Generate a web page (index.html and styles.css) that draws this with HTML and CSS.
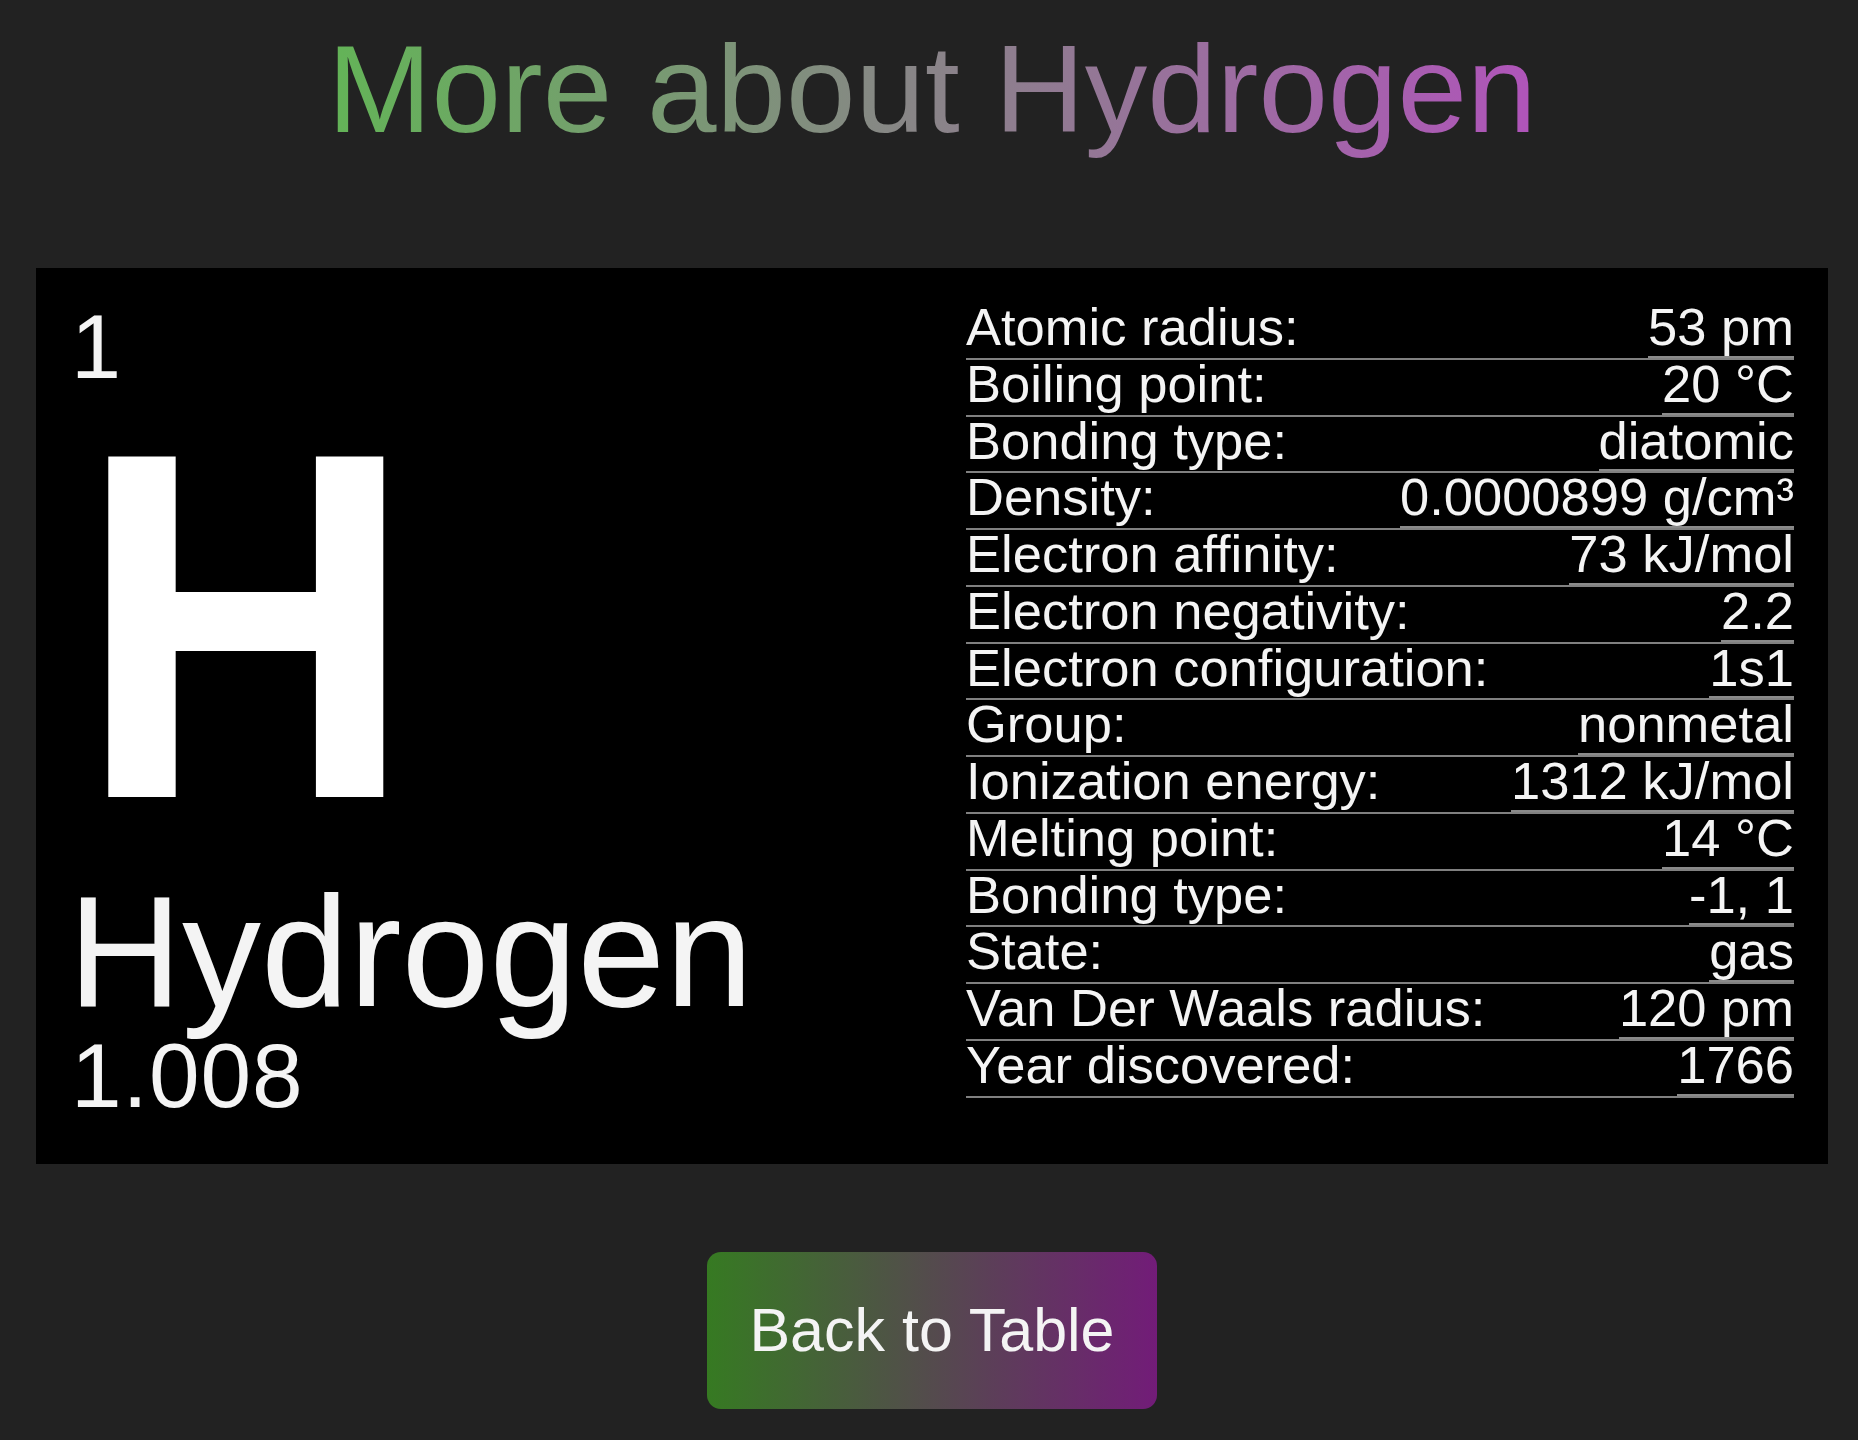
FILE: index.html
```html
<!DOCTYPE html>
<html lang="en">
<head>
<meta charset="utf-8">
<title>More about Hydrogen</title>
<link rel="stylesheet" href="styles.css">
</head>
<body>
<main class="page">
  <h1 class="title"><span class="title-text">More about Hydrogen</span></h1>

  <section class="card">
    <div class="element">
      <div class="element-number">1</div>
      <div class="element-symbol">H</div>
      <div class="element-name">Hydrogen</div>
      <div class="element-mass">1.008</div>
    </div>

    <div class="props">
      <div class="prop"><span class="prop-label">Atomic radius:</span><span class="prop-value">53 pm</span></div>
      <div class="prop"><span class="prop-label">Boiling point:</span><span class="prop-value">20 °C</span></div>
      <div class="prop"><span class="prop-label">Bonding type:</span><span class="prop-value">diatomic</span></div>
      <div class="prop"><span class="prop-label">Density:</span><span class="prop-value">0.0000899 g/cm³</span></div>
      <div class="prop"><span class="prop-label">Electron affinity:</span><span class="prop-value">73 kJ/mol</span></div>
      <div class="prop"><span class="prop-label">Electron negativity:</span><span class="prop-value">2.2</span></div>
      <div class="prop"><span class="prop-label">Electron configuration:</span><span class="prop-value">1s1</span></div>
      <div class="prop"><span class="prop-label">Group:</span><span class="prop-value">nonmetal</span></div>
      <div class="prop"><span class="prop-label">Ionization energy:</span><span class="prop-value">1312 kJ/mol</span></div>
      <div class="prop"><span class="prop-label">Melting point:</span><span class="prop-value">14 °C</span></div>
      <div class="prop"><span class="prop-label">Bonding type:</span><span class="prop-value">-1, 1</span></div>
      <div class="prop"><span class="prop-label">State:</span><span class="prop-value">gas</span></div>
      <div class="prop"><span class="prop-label">Van Der Waals radius:</span><span class="prop-value">120 pm</span></div>
      <div class="prop"><span class="prop-label">Year discovered:</span><span class="prop-value">1766</span></div>
    </div>
  </section>

  <div class="actions">
    <a class="back-button" href="#">Back to Table</a>
  </div>
</main>
</body>
</html>
```

FILE: styles.css
```css
* {
  box-sizing: border-box;
}

html, body {
  margin: 0;
  padding: 0;
  background: #222222;
}

body {
  font-family: "Liberation Sans", Arial, Helvetica, sans-serif;
  color: #f4f4f4;
}

.page {
  margin-left: 6px;
  display: flex;
  flex-direction: column;
  align-items: center;
}

.title {
  margin: 17px 0 107px;
  font-size: 125px;
  font-weight: 400;
  line-height: 144px;
  text-align: center;
}

.title-text {
  display: inline-block;
  background: linear-gradient(to right, #63b457, #b054ba);
  -webkit-background-clip: text;
  background-clip: text;
  color: transparent;
}

.card {
  width: 1792px;
  background: #000000;
  display: flex;
  justify-content: space-between;
  align-items: flex-start;
  padding: 34px 34px 43px 32px;
}

.element {
  display: flex;
  flex-direction: column;
  align-items: flex-start;
  color: #f4f4f4;
}

.element-number {
  margin: 2px 0 0 3px;
  font-size: 90px;
  line-height: 87px;
}

.element-symbol {
  margin: 0 0 10px 9px;
  font-size: 495px;
  font-weight: 700;
  line-height: 470px;
  color: #ffffff;
  transform: scaleX(0.945);
  transform-origin: left center;
}

.element-name {
  font-size: 158px;
  line-height: 160px;
}

.element-mass {
  margin-left: 3px;
  font-size: 91px;
  line-height: 90px;
  letter-spacing: 1px;
}

.props {
  width: 828px;
  margin-top: 1px;
  display: flex;
  flex-direction: column;
}

.prop {
  height: 56.75px;
  display: flex;
  justify-content: space-between;
  align-items: stretch;
  border-bottom: 2px solid #808080;
  font-size: 52.5px;
  line-height: 47px;
}

.prop-label {
  white-space: nowrap;
}

.prop-value {
  white-space: nowrap;
  border-bottom: 2px solid #8a8a8a;
}

.actions {
  margin-top: 88px;
}

.back-button {
  display: inline-block;
  padding: 43px 42px 44px;
  border-radius: 14px;
  background: linear-gradient(to right, #367a22, #721c78);
  color: #f4f4f4;
  font-size: 61px;
  line-height: 70px;
  text-decoration: none;
}
```
